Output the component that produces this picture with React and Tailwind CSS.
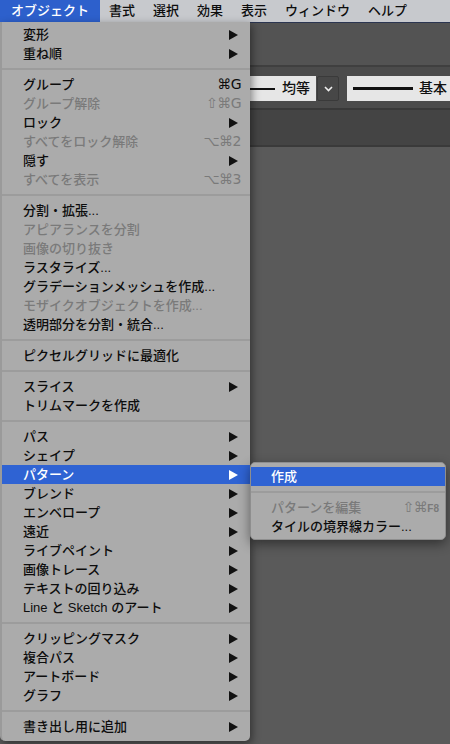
import React from 'react';

// --- Data ---
const MENU_BAR = ['書式', '選択', '効果', '表示', 'ウィンドウ', 'ヘルプ'];

const SECTIONS = [
    [
        { label: '変形', arrow: true },
        { label: '重ね順', arrow: true },
    ],
    [
        { label: 'グループ', shortcut: '⌘G' },
        { label: 'グループ解除', shortcut: '⇧⌘G', disabled: true },
        { label: 'ロック', arrow: true },
        { label: 'すべてをロック解除', shortcut: '⌥⌘2', disabled: true },
        { label: '隠す', arrow: true },
        { label: 'すべてを表示', shortcut: '⌥⌘3', disabled: true },
    ],
    [
        { label: '分割・拡張...' },
        { label: 'アピアランスを分割', disabled: true },
        { label: '画像の切り抜き', disabled: true },
        { label: 'ラスタライズ...' },
        { label: 'グラデーションメッシュを作成...' },
        { label: 'モザイクオブジェクトを作成...', disabled: true },
        { label: '透明部分を分割・統合...' },
    ],
    [{ label: 'ピクセルグリッドに最適化' }],
    [
        { label: 'スライス', arrow: true },
        { label: 'トリムマークを作成' },
    ],
    [
        { label: 'パス', arrow: true },
        { label: 'シェイプ', arrow: true },
        { label: 'パターン', arrow: true, active: true },
        { label: 'ブレンド', arrow: true },
        { label: 'エンベロープ', arrow: true },
        { label: '遠近', arrow: true },
        { label: 'ライブペイント', arrow: true },
        { label: '画像トレース', arrow: true },
        { label: 'テキストの回り込み', arrow: true },
        { label: 'Line と Sketch のアート', arrow: true },
    ],
    [
        { label: 'クリッピングマスク', arrow: true },
        { label: '複合パス', arrow: true },
        { label: 'アートボード', arrow: true },
        { label: 'グラフ', arrow: true },
    ],
    [{ label: '書き出し用に追加', arrow: true }],
];

const FONT = 'font-["Liberation_Sans","Noto_Sans_CJK_JP",sans-serif]';

// --- Pieces ---
const Arrow = ({ white }) => (
    <svg width="9" height="10" viewBox="0 0 9 10" className="mr-[3px]">
        <polygon points="0,0 9,5 0,10" fill={white ? '#ffffff' : '#111111'} />
    </svg>
);

const Separator = () => (
    <div className="py-[5px]">
        <div className="h-[2px] bg-[#9c9c9c]" />
    </div>
);

const MenuItem = ({ item }) => {
    const color = item.active ? 'text-white' : item.disabled ? 'text-[#7a7a7a]' : 'text-[#0d0d0d]';
    return (
        <div className={`h-[19px] flex items-center justify-between pl-[21px] pr-[9px] ${item.active ? 'bg-[#2f63d3]' : ''} ${color}`}>
            <span className="text-[13px] font-medium leading-[19px] whitespace-nowrap">{item.label}</span>
            {item.arrow && <Arrow white={item.active} />}
            {item.shortcut && (
                <span className='text-[14px] leading-[19px] font-["DejaVu_Sans","Liberation_Sans",sans-serif] tracking-[-0.5px]'>
                    {item.shortcut}
                </span>
            )}
        </div>
    );
};

const Submenu = () => (
    <div className="absolute left-[250px] top-[462px] w-[196px] pt-[4px] pb-[3px] rounded-[5px] bg-[#ababab] border border-[#8e8e8e] shadow-[0_4px_12px_rgba(0,0,0,0.45)] overflow-hidden font-medium">
        <div className="h-[19px] flex items-center pl-[20px] bg-[#2f63d3] text-white text-[13px]">作成</div>
        <Separator />
        <div className="h-[19px] flex items-center justify-between pl-[20px] pr-[6px] text-[#7a7a7a]">
            <span className="text-[13px]">パターンを編集</span>
            <span className="flex items-baseline">
                <span className='text-[14px] font-["DejaVu_Sans",sans-serif] tracking-[-0.5px]'>⇧⌘</span>
                <span className="text-[10px] font-bold">F8</span>
            </span>
        </div>
        <div className="h-[19px] flex items-center pl-[20px] text-[#0d0d0d] text-[13px]">タイルの境界線カラー...</div>
    </div>
);

// --- App ---
export default function App() {
    return (
        <div className={`relative w-[450px] h-[744px] overflow-hidden flex flex-col bg-[#5a5a5a] ${FONT}`}>
            {/* menu bar */}
            <div className="h-[22px] flex items-center bg-[#c7c9cd] text-[13px] font-medium text-[#0d0d0d]">
                <div className="h-full flex items-center px-[11px] bg-[#2d60cc] text-white">オブジェクト</div>
                {MENU_BAR.map((m) => (
                    <div key={m} className="px-[9px]">{m}</div>
                ))}
            </div>

            {/* application chrome behind the menu */}
            <div className="h-[1px] bg-[#2b3550]" />
            <div className="h-[42px] bg-[#535353]" />
            <div className="h-[2px] bg-[#3f3f3f]" />
            <div className="h-[41px] bg-[#4b4b4b] flex items-start pt-[9px] pl-[230px] gap-[1px]">
                <div className="h-[25px] w-[86px] bg-[#e6e6e6] flex items-center">
                    <div className="w-[45px] h-[2px] bg-[#111]" />
                    <span className="ml-[7px] text-[14px] font-medium text-[#111]">均等</span>
                </div>
                <div className="h-[25px] w-[22px] bg-[#474747] border border-[#3a3a3a] rounded-[2px] flex items-center justify-center">
                    <svg width="9" height="6" viewBox="0 0 9 6">
                        <polyline points="1,1 4.5,4.5 8,1" fill="none" stroke="#eeeeee" strokeWidth="1.6" />
                    </svg>
                </div>
                <div className="ml-[7px] h-[25px] flex-1 bg-[#e6e6e6] flex items-center pl-[6px]">
                    <div className="w-[60px] h-[3px] bg-[#111]" />
                    <span className="ml-[6px] text-[14px] font-medium text-[#111] whitespace-nowrap">基本</span>
                </div>
            </div>
            <div className="h-[2px] bg-[#393939]" />
            <div className="h-[35px] bg-[#444444]" />
            <div className="h-[2px] bg-[#3a3a3a]" />
            <div className="flex-1 bg-[#5a5a5a]" />

            {/* object menu */}
            <div className="absolute left-0 top-[22px] w-[250px] pt-[3px] pb-[5px] bg-[#ababab] rounded-b-[5px] border-l-[2px] border-[#9a9a9a] shadow-[2px_3px_8px_rgba(0,0,0,0.45)]">
                {SECTIONS.map((section, i) => (
                    <React.Fragment key={i}>
                        {i > 0 && <Separator />}
                        {section.map((item) => (
                            <MenuItem key={item.label} item={item} />
                        ))}
                    </React.Fragment>
                ))}
            </div>

            <Submenu />
        </div>
    );
}
